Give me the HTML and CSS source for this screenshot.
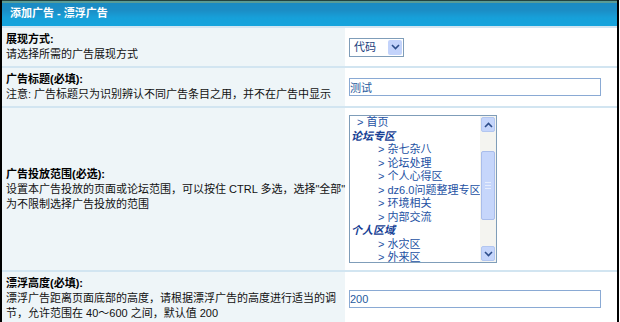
FILE: index.html
```html
<!DOCTYPE html>
<html>
<head>
    <meta charset="UTF-8">
    <title>添加广告 - 漂浮广告</title>
    <link rel="stylesheet" href="styles.css">
</head>
<body>
<div class="wrap">
    <table class="tb">
        <colgroup><col class="c1"><col></colgroup>
        <tr class="header"><td colspan="2">添加广告 - 漂浮广告</td></tr>
        <tr>
            <td class="altbg1"><b>展现方式:</b><br>请选择所需的广告展现方式</td>
            <td class="altbg2">
                <span class="sel">
                    <span class="sel_txt">代码</span>
                    <span class="sel_btn">
                        <svg width="9" height="6" viewBox="0 0 9 6"><path d="M1 1 L4.5 4.5 L8 1" fill="none" stroke="#2d4d8a" stroke-width="1.6"/></svg>
                    </span>
                </span>
            </td>
        </tr>
        <tr>
            <td class="altbg1"><b>广告标题(必填):</b><br>注意: 广告标题只为识别辨认不同广告条目之用，并不在广告中显示</td>
            <td class="altbg2"><input type="text" class="txt" name="title" value="测试"></td>
        </tr>
        <tr>
            <td class="altbg1"><b>广告投放范围(必选):</b><br>设置本广告投放的页面或论坛范围，可以按住 CTRL 多选，选择"全部"<br>为不限制选择广告投放的范围</td>
            <td class="altbg2">
                <!-- 多选列表 用div模拟 xp风格滚动条 -->
                <div class="listbox">
                    <ul class="opts">
                        <li class="lv1">&gt; 首页</li>
                        <li class="grp">论坛专区</li>
                        <li class="lv2">&gt; 杂七杂八</li>
                        <li class="lv2">&gt; 论坛处理</li>
                        <li class="lv2">&gt; 个人心得区</li>
                        <li class="lv2">&gt; dz6.0问题整理专区</li>
                        <li class="lv2">&gt; 环境相关</li>
                        <li class="lv2">&gt; 内部交流</li>
                        <li class="grp">个人区域</li>
                        <li class="lv2">&gt; 水灾区</li>
                        <li class="lv2">&gt; 外来区</li>
                    </ul>
                    <div class="sbar">
                        <span class="sb_btn">
                            <svg width="9" height="6" viewBox="0 0 9 6"><path d="M1 5 L4.5 1.5 L8 5" fill="none" stroke="#2d4d8a" stroke-width="1.6"/></svg>
                        </span>
                        <span class="sb_track"><span class="sb_thumb"><i></i><i></i><i></i></span></span>
                        <span class="sb_btn">
                            <svg width="9" height="6" viewBox="0 0 9 6"><path d="M1 1 L4.5 4.5 L8 1" fill="none" stroke="#2d4d8a" stroke-width="1.6"/></svg>
                        </span>
                    </div>
                </div>
            </td>
        </tr>
        <tr>
            <td class="altbg1"><b>漂浮高度(必填):</b><br>漂浮广告距离页面底部的高度，请根据漂浮广告的高度进行适当的调<br>节，允许范围在 40～600 之间，默认值 200</td>
            <td class="altbg2"><input type="text" class="txt" name="floath" value="200"></td>
        </tr>
    </table>
</div>
</body>
</html>
```

FILE: styles.css
```css
body{ margin: 0; background: white;
    font: 11px/15px "Liberation Sans", "Noto Sans CJK SC", sans-serif;
    color: #111;
}
.wrap{
    width: 615px;
    height: 322px;
    overflow: hidden;
    border-left: 2px solid #000;
    border-right: 2px solid #000;
}
.tb{ width: 100%; border-collapse: collapse; table-layout: fixed; }
.tb .c1{ width: 343px; }
.header td{
    height: 25px;
    padding: 0 8px;
    color: white;
    font-weight: bold;
    background: linear-gradient(#1b8ac2 0, #1b8dc5 35%, #17a0d9 65%, #15a4dd 100%);
    border-top: 1px solid #23423f;
    border-bottom: 2px solid #3d786d;
    box-shadow: inset 0 2px 0 #5a9c96;
}
.tb td{ border-bottom: 2px solid #d2e5f1; }
.altbg1{
    padding: 4px 0 4px 4px;
    background: #eef5f8;
    vertical-align: middle;
    white-space: nowrap;
    color: #111;
}
.altbg1 b{ color: #000; }
.altbg2{
    padding: 4px 4px;
    background: white;
    vertical-align: middle;
}
.txt{
    width: 252px;
    height: 18px;
    box-sizing: border-box;
    margin: 0;
    padding: 0;
    border: 1px solid #8aaad4;
    outline: none;
    font: 11px "Liberation Sans", "Noto Sans CJK SC", sans-serif;
    color: #1f5a9e;
}
.sel{
    display: flex;
    align-items: center;
    justify-content: space-between;
    width: 55px;
    height: 19px;
    box-sizing: border-box;
    border: 1px solid #7f9db9;
    background: white;
    color: #1c3f80;
}
.sel_txt{ padding-left: 4px; }
.sel_btn{
    display: flex;
    align-items: center;
    justify-content: center;
    width: 14px;
    height: 15px;
    margin-right: 1px;
    background: #c3d3fb;
    border-radius: 2px;
}
.listbox{
    display: flex;
    width: 148px;
    height: 148px;
    margin: 3px 0;
    box-sizing: border-box;
    border: 1px solid #7f9db9;
    background: white;
    overflow: hidden;
}
.opts{
    flex: 1;
    margin: 0;
    padding: 0;
    list-style: none;
    color: #2351a3;
    line-height: 13.5px;
    white-space: nowrap;
}
.opts .lv1{ padding-left: 7px; }
.opts .grp{ padding-left: 1px; font-weight: bold; font-style: italic; color: #173f95; }
.opts .lv2{ padding-left: 28px; }
.sbar{
    display: flex;
    flex-direction: column;
    width: 16px;
    background: #f4f4f0;
}
.sb_btn{
    display: flex;
    align-items: center;
    justify-content: center;
    height: 15px;
    margin: 1px 1px 0;
    background: #c5d5fb;
    border: 1px solid #b2c6f0;
    border-radius: 2px;
    box-sizing: border-box;
}
.sb_btn:last-child{ margin: 0 1px 1px; }
.sb_track{
    flex: 1;
    display: flex;
    flex-direction: column;
    padding: 19px 0 26px;
}
.sb_thumb{
    flex: 1;
    display: flex;
    flex-direction: column;
    align-items: center;
    justify-content: center;
    gap: 2px;
    margin: 0 1px;
    background: #c6d6fb;
    border: 1px solid #a9bdeb;
    border-radius: 2px;
}
.sb_thumb i{ display: block; width: 6px; height: 1px; background: #e6edfd; }
```
